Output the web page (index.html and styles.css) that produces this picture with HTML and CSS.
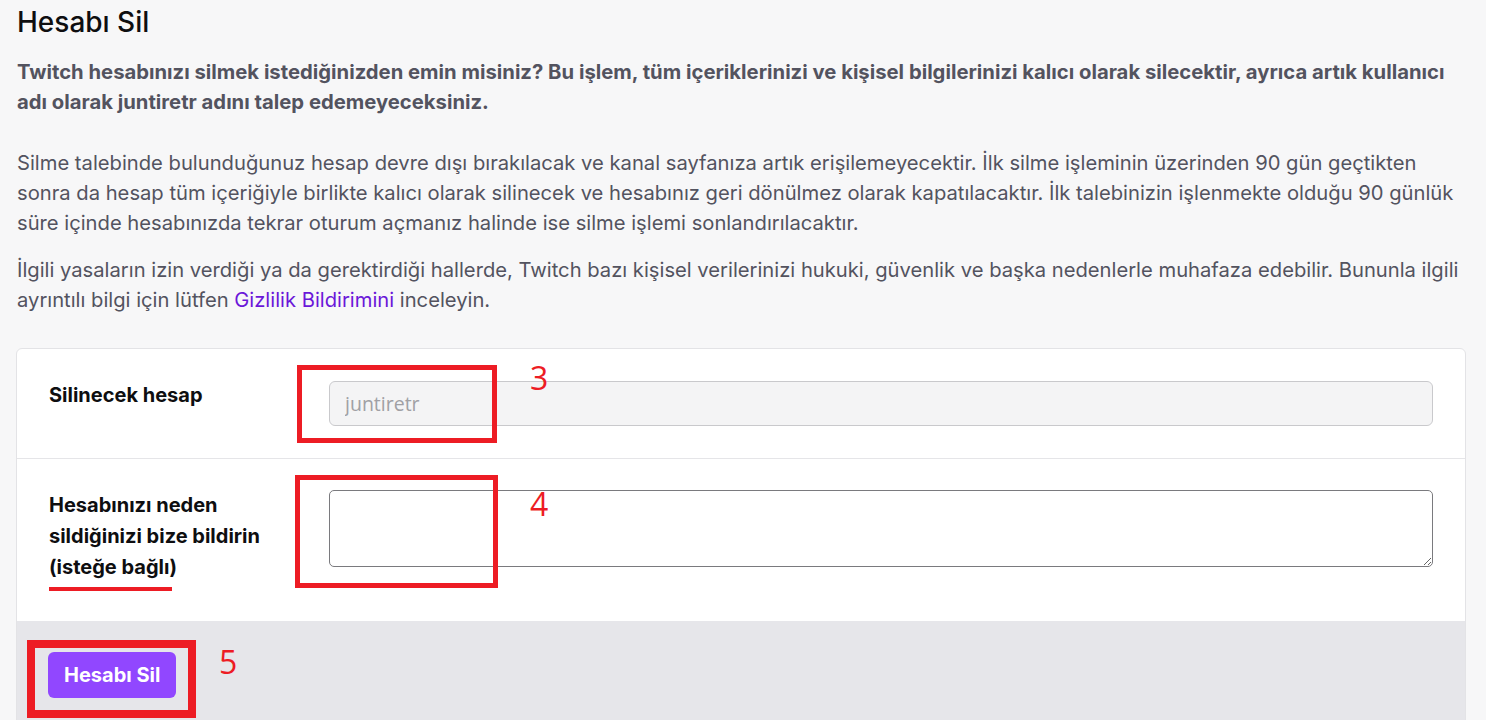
FILE: index.html
```html
<!DOCTYPE html>
<html lang="tr">
<head>
<meta charset="utf-8">
<title>Hesabı Sil</title>
<link rel="stylesheet" href="styles.css">
</head>
<body>
<main class="page">
  <h1 class="title">Hesabı Sil</h1>
  <p class="lead">Twitch hesabınızı silmek istediğinizden emin misiniz? Bu işlem, tüm içeriklerinizi ve kişisel bilgilerinizi kalıcı olarak silecektir, ayrıca artık kullanıcı adı olarak juntiretr adını talep edemeyeceksiniz.</p>
  <p class="body">Silme talebinde bulunduğunuz hesap devre dışı bırakılacak ve kanal sayfanıza artık erişilemeyecektir. İlk silme işleminin üzerinden 90 gün geçtikten sonra da hesap tüm içeriğiyle birlikte kalıcı olarak silinecek ve hesabınız geri dönülmez olarak kapatılacaktır. İlk talebinizin işlenmekte olduğu 90 günlük süre içinde hesabınızda tekrar oturum açmanız halinde ise silme işlemi sonlandırılacaktır.</p>
  <p class="body last">İlgili yasaların izin verdiği ya da gerektirdiği hallerde, Twitch bazı kişisel verilerinizi hukuki, güvenlik ve başka nedenlerle muhafaza edebilir. Bununla ilgili ayrıntılı bilgi için lütfen <a class="link" href="#">Gizlilik Bildirimini</a> inceleyin.</p>

  <section class="card">
    <div class="row row-first">
      <label class="label">Silinecek hesap</label>
      <input class="input" type="text" value="juntiretr" disabled>
    </div>
    <div class="row row-second">
      <label class="label">Hesabınızı neden sildiğinizi bize bildirin (isteğe bağlı)</label>
      <textarea class="textarea"></textarea>
    </div>
    <div class="footer">
      <button class="btn" type="button">Hesabı Sil</button>
    </div>
  </section>
</main>

<div class="overlay">
  <div class="mark box3"></div>
  <div class="mark box4"></div>
  <div class="mark box5"></div>
  <div class="underline"></div>
  <span class="num num3">3</span>
  <span class="num num4">4</span>
  <span class="num num5">5</span>
</div>
</body>
</html>
```

FILE: styles.css
```css
html, body {
  margin: 0;
  padding: 0;
}

body {
  position: relative;
  background: #f7f7f8;
  font-family: Inter, "Noto Sans", sans-serif;
  color: #53535f;
  overflow: hidden;
}

.page {
  padding: 5px 20px 0 16px;
}

.title {
  margin: 0 0 18px 1px;
  font-size: 28px;
  line-height: 34px;
  font-weight: 500;
  color: #0e0e10;
}

.lead {
  margin: 0 0 31px 1px;
  font-size: 20.25px;
  line-height: 30px;
  font-weight: 700;
  color: #53535f;
}

.body {
  margin: 0 0 17px 1px;
  font-size: 20.2px;
  line-height: 30px;
  font-weight: 400;
  color: #53535f;
}

.body.last {
  margin-bottom: 33px;
}

.link {
  color: #6b17d9;
  text-decoration: none;
}

.card {
  background: #ffffff;
  border: 1px solid #e3e3e6;
  border-radius: 6px;
  overflow: hidden;
}

.row {
  display: grid;
  grid-template-columns: 280px 1fr;
  align-items: start;
  padding: 32px 32px;
  border-bottom: 1px solid #e5e5e8;
}

.row-second {
  padding-top: 31px;
  padding-bottom: 38px;
  border-bottom: none;
}

.label {
  font-size: 20px;
  line-height: 31px;
  font-weight: 700;
  color: #0e0e10;
  padding-right: 30px;
}

.row-first .label {
  line-height: 28px;
}

.input {
  box-sizing: border-box;
  width: 100%;
  height: 45px;
  margin: 0;
  padding: 0 15px;
  border: 1px solid #c9c9cc;
  border-radius: 6px;
  background: #f4f4f5;
  font-family: "Open Sans", "Noto Sans", sans-serif;
  font-size: 19.5px;
  color: #a0a0a4;
}

.textarea {
  box-sizing: border-box;
  display: block;
  width: 100%;
  height: 77px;
  margin: 0;
  padding: 8px 15px;
  border: 1px solid #7a7a7e;
  border-radius: 5px;
  background: #ffffff;
  font-family: Inter, sans-serif;
  font-size: 18px;
  resize: vertical;
}

.footer {
  background: #e6e6ea;
  padding: 31px 32px 32px 31px;
}

.btn {
  display: block;
  height: 46px;
  padding: 0 16px;
  border: none;
  border-radius: 6px;
  background: #9147ff;
  color: #ffffff;
  font-family: Inter, sans-serif;
  font-size: 20px;
  font-weight: 700;
  cursor: pointer;
}

/* annotation overlay drawn on the screenshot */
.overlay {
  position: absolute;
  top: 0;
  left: 0;
  width: 0;
  height: 0;
}

.mark {
  position: absolute;
  box-sizing: border-box;
  border: 5px solid #ed1c24;
}

.box3 {
  left: 297px;
  top: 365px;
  width: 200px;
  height: 78px;
}

.box4 {
  left: 295px;
  top: 475px;
  width: 203px;
  height: 113px;
}

.box5 {
  left: 27px;
  top: 640px;
  width: 169px;
  height: 78px;
  border-width: 8px;
}

.underline {
  position: absolute;
  left: 49px;
  top: 587px;
  width: 123px;
  height: 4px;
  background: #ed1c24;
}

.num {
  position: absolute;
  font-family: "Open Sans", "Noto Sans", sans-serif;
  font-weight: 400;
  font-size: 32px;
  line-height: 33px;
  color: #ed1c24;
}

.num3 { left: 530px; top: 361px; }
.num4 { left: 530px; top: 487px; }
.num5 { left: 219px; top: 645px; }
```
